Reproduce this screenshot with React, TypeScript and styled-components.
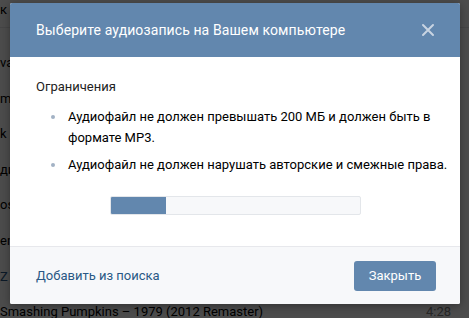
import styled, { createGlobalStyle } from "styled-components";

const Global = createGlobalStyle`
  html, body {
    margin: 0;
    padding: 0;
    background: #fff;
    font-family: Roboto, "Liberation Sans", Arial, sans-serif;
    -webkit-font-smoothing: antialiased;
  }
`;

const Page = styled.div`
  position: relative;
  width: 469px;
  height: 318px;
  overflow: hidden;
  background: #fff;
`;

const PageHead = styled.div`
  height: 27px;
  border-bottom: 1px solid #e7e8ec;
  font-size: 13px;
  line-height: 14px;
  color: #000;
  white-space: nowrap;
  overflow: hidden;
  div {
    margin-top: 3px;
  }
`;

const TrackList = styled.div`
  margin-top: 17px;
`;

const Track = styled.div<{ $link?: boolean }>`
  display: flex;
  justify-content: space-between;
  height: 35.6px;
  line-height: 36px;
  font-size: 13px;
  color: ${(p) => (p.$link ? "#2a5885" : "#000")};
  white-space: nowrap;
  padding-right: 18px;
  span:last-child {
    color: #828282;
  }
`;

const Overlay = styled.div`
  position: absolute;
  inset: 0;
  background: rgba(0, 0, 0, 0.7);
`;

const Box = styled.div`
  position: absolute;
  left: 10px;
  top: 3px;
  width: 450px;
  border-radius: 2px;
  overflow: hidden;
  background: #fff;
  box-shadow: 0 2px 10px rgba(0, 0, 0, 0.35);
`;

const Header = styled.div`
  display: flex;
  align-items: center;
  justify-content: space-between;
  height: 54px;
  padding: 0 25px 0 26px;
  background: #6287ae;
  color: #fff;
`;

const Title = styled.div`
  font-size: 14px;
  letter-spacing: 0.1px;
`;

const Close = styled.button`
  display: flex;
  border: 0;
  padding: 0;
  background: none;
  cursor: pointer;
`;

const Body = styled.div`
  padding: 21px 6px 31px 26px;
  font-size: 13px;
  color: #000;
`;

const Heading = styled.div`
  line-height: 18px;
  color: #222;
`;

const Rules = styled.ul`
  list-style: none;
  margin: 10px 0 0;
  padding: 0;
  display: flex;
  flex-direction: column;
  gap: 6px;
`;

const Rule = styled.li`
  position: relative;
  padding-left: 32px;
  line-height: 21px;
  &::before {
    content: "";
    position: absolute;
    left: 15px;
    top: 9px;
    width: 4px;
    height: 4px;
    border-radius: 50%;
    background: #a2b2c5;
  }
`;

const Progress = styled.div`
  margin: 21px 0 0 74px;
  width: 251px;
  height: 19px;
  box-sizing: border-box;
  border: 1px solid #e3e6ea;
  border-radius: 2px;
  background: #f7f8fa;
  overflow: hidden;
`;

const Fill = styled.div`
  height: 100%;
  background: #6287ae;
`;

const Footer = styled.div`
  display: flex;
  align-items: center;
  justify-content: space-between;
  height: 57px;
  padding: 0 24px 0 26px;
  border-top: 1px solid #e7e8ec;
  background: #f7f8fa;
`;

const Link = styled.a`
  font-size: 13px;
  color: #2a5885;
  text-decoration: none;
  cursor: pointer;
`;

const Button = styled.button`
  width: 82px;
  height: 30px;
  border: 0;
  border-radius: 3px;
  background: #6287ae;
  color: #fff;
  font-family: inherit;
  font-size: 13px;
  cursor: pointer;
`;

const tracks: [string, string, boolean?][] = [
  ["va – Smells Like Teen Spirit", "5:01"],
  ["metallica – Nothing Else Matters", "6:28"],
  ["k – Fire", "4:13"],
  ["дио – Без названия", "3:40"],
  ["osbourne – Dreamer", "4:44"],
  ["en – Bohemian Rhapsody", "5:55"],
  ["Z – Sharp Dressed Man", "4:15", true],
  ["Smashing Pumpkins  –  1979 (2012 Remaster)", "4:28"],
];

export default function App() {
  const progress = 0.22;
  return (
    <>
      <Global />
      <Page>
        <PageHead>
          <div>к по аудиозаписям</div>
        </PageHead>
        <TrackList>
          {tracks.map(([name, time, link]) => (
            <Track key={name} $link={link}>
              <span>{name}</span>
              <span>{time}</span>
            </Track>
          ))}
        </TrackList>
        <Overlay />
        <Box>
          <Header>
            <Title>Выберите аудиозапись на Вашем компьютере</Title>
            <Close aria-label="Закрыть">
              <svg width="14" height="14" viewBox="0 0 14 14">
                <path
                  d="M2 2 L12 12 M12 2 L2 12"
                  stroke="#c8d4e2"
                  strokeWidth="2"
                  strokeLinecap="round"
                />
              </svg>
            </Close>
          </Header>
          <Body>
            <Heading>Ограничения</Heading>
            <Rules>
              <Rule>
                Аудиофайл не должен превышать 200 МБ и должен быть в формате
                MP3.
              </Rule>
              <Rule>Аудиофайл не должен нарушать авторские и смежные права.</Rule>
            </Rules>
            <Progress>
              <Fill style={{ width: `${progress * 100}%` }} />
            </Progress>
          </Body>
          <Footer>
            <Link>Добавить из поиска</Link>
            <Button>Закрыть</Button>
          </Footer>
        </Box>
      </Page>
    </>
  );
}
